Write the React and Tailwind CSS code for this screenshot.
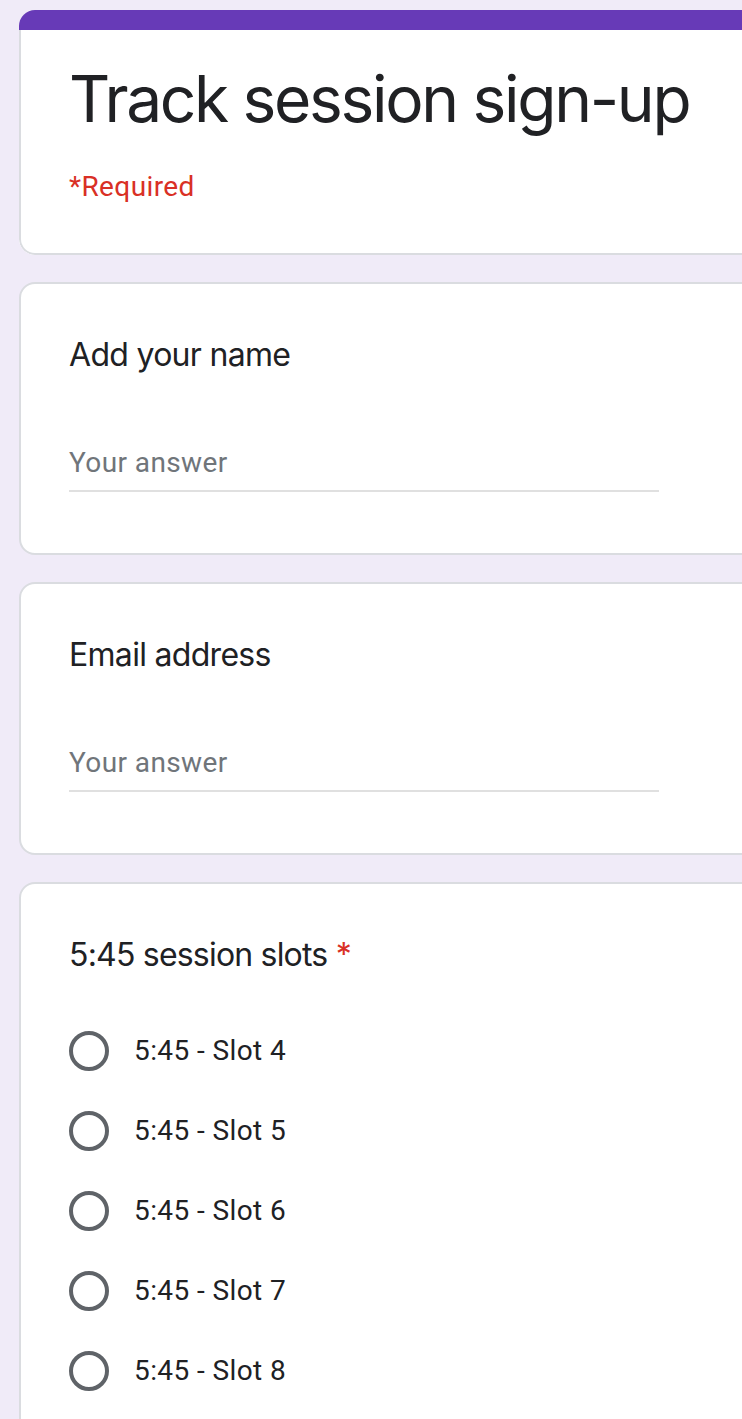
const slots = ["5:45 - Slot 4", "5:45 - Slot 5", "5:45 - Slot 6", "5:45 - Slot 7", "5:45 - Slot 8"];

const TextQuestion = ({ label }) => (
  <div className="mt-[27px] ml-[19px] w-[780px] bg-white border-2 border-[#dadce0] rounded-[16px] px-[48px] pt-[47px] pb-[61px]">
    <div className="h-[48px] leading-[48px] text-[32px] tracking-[-0.7px] text-[#202124] font-['Inter',sans-serif]">
      {label}
    </div>
    <div className="mt-[60px] w-[590px] pb-[3px] border-b-2 border-[#e0e0e0]">
      <div className="h-[48px] leading-[48px] text-[28px] tracking-[0.4px] text-[#70757a] font-['Roboto',sans-serif]">
        Your answer
      </div>
    </div>
  </div>
);

export default function App() {
  return (
    <div className="w-[742px] h-[1419px] overflow-hidden bg-[#f0ebf8] pt-[10px]">
      {/* header card */}
      <div className="ml-[19px] w-[780px] rounded-[16px] overflow-hidden bg-white">
        <div className="h-[20px] bg-[#673ab7]" />
        <div className="border-2 border-t-0 border-[#dadce0] rounded-b-[16px] px-[48px] pt-[29px] pb-[46px]">
          <h1 className="h-[80px] leading-[80px] text-[64px] tracking-[-2.3px] text-[#202124] font-['Inter',sans-serif] whitespace-nowrap">
            Track session sign-up
          </h1>
          <p className="mt-[28px] h-[40px] leading-[40px] text-[28px] tracking-[0.4px] text-[#d93025] font-['Roboto',sans-serif]">
            *Required
          </p>
        </div>
      </div>

      <TextQuestion label="Add your name" />
      <TextQuestion label="Email address" />

      {/* radio question */}
      <div className="mt-[27px] ml-[19px] w-[780px] bg-white border-2 border-[#dadce0] rounded-[16px] px-[48px] pt-[47px] pb-[40px]">
        <div className="h-[48px] leading-[48px] text-[32px] tracking-[-0.8px] text-[#202124] font-['Inter',sans-serif]">
          5:45 session slots <span className="text-[#d93025]">*</span>
        </div>
        <div className="mt-[32px] flex flex-col">
          {slots.map((s) => (
            <label key={s} className="h-[80px] flex items-center gap-[25px]">
              <span className="w-[40px] h-[40px] rounded-full border-4 border-[#5f6368] shrink-0" />
              <span className="text-[28px] tracking-[0.4px] text-[#202124] font-['Roboto',sans-serif]">{s}</span>
            </label>
          ))}
        </div>
      </div>
    </div>
  );
}
